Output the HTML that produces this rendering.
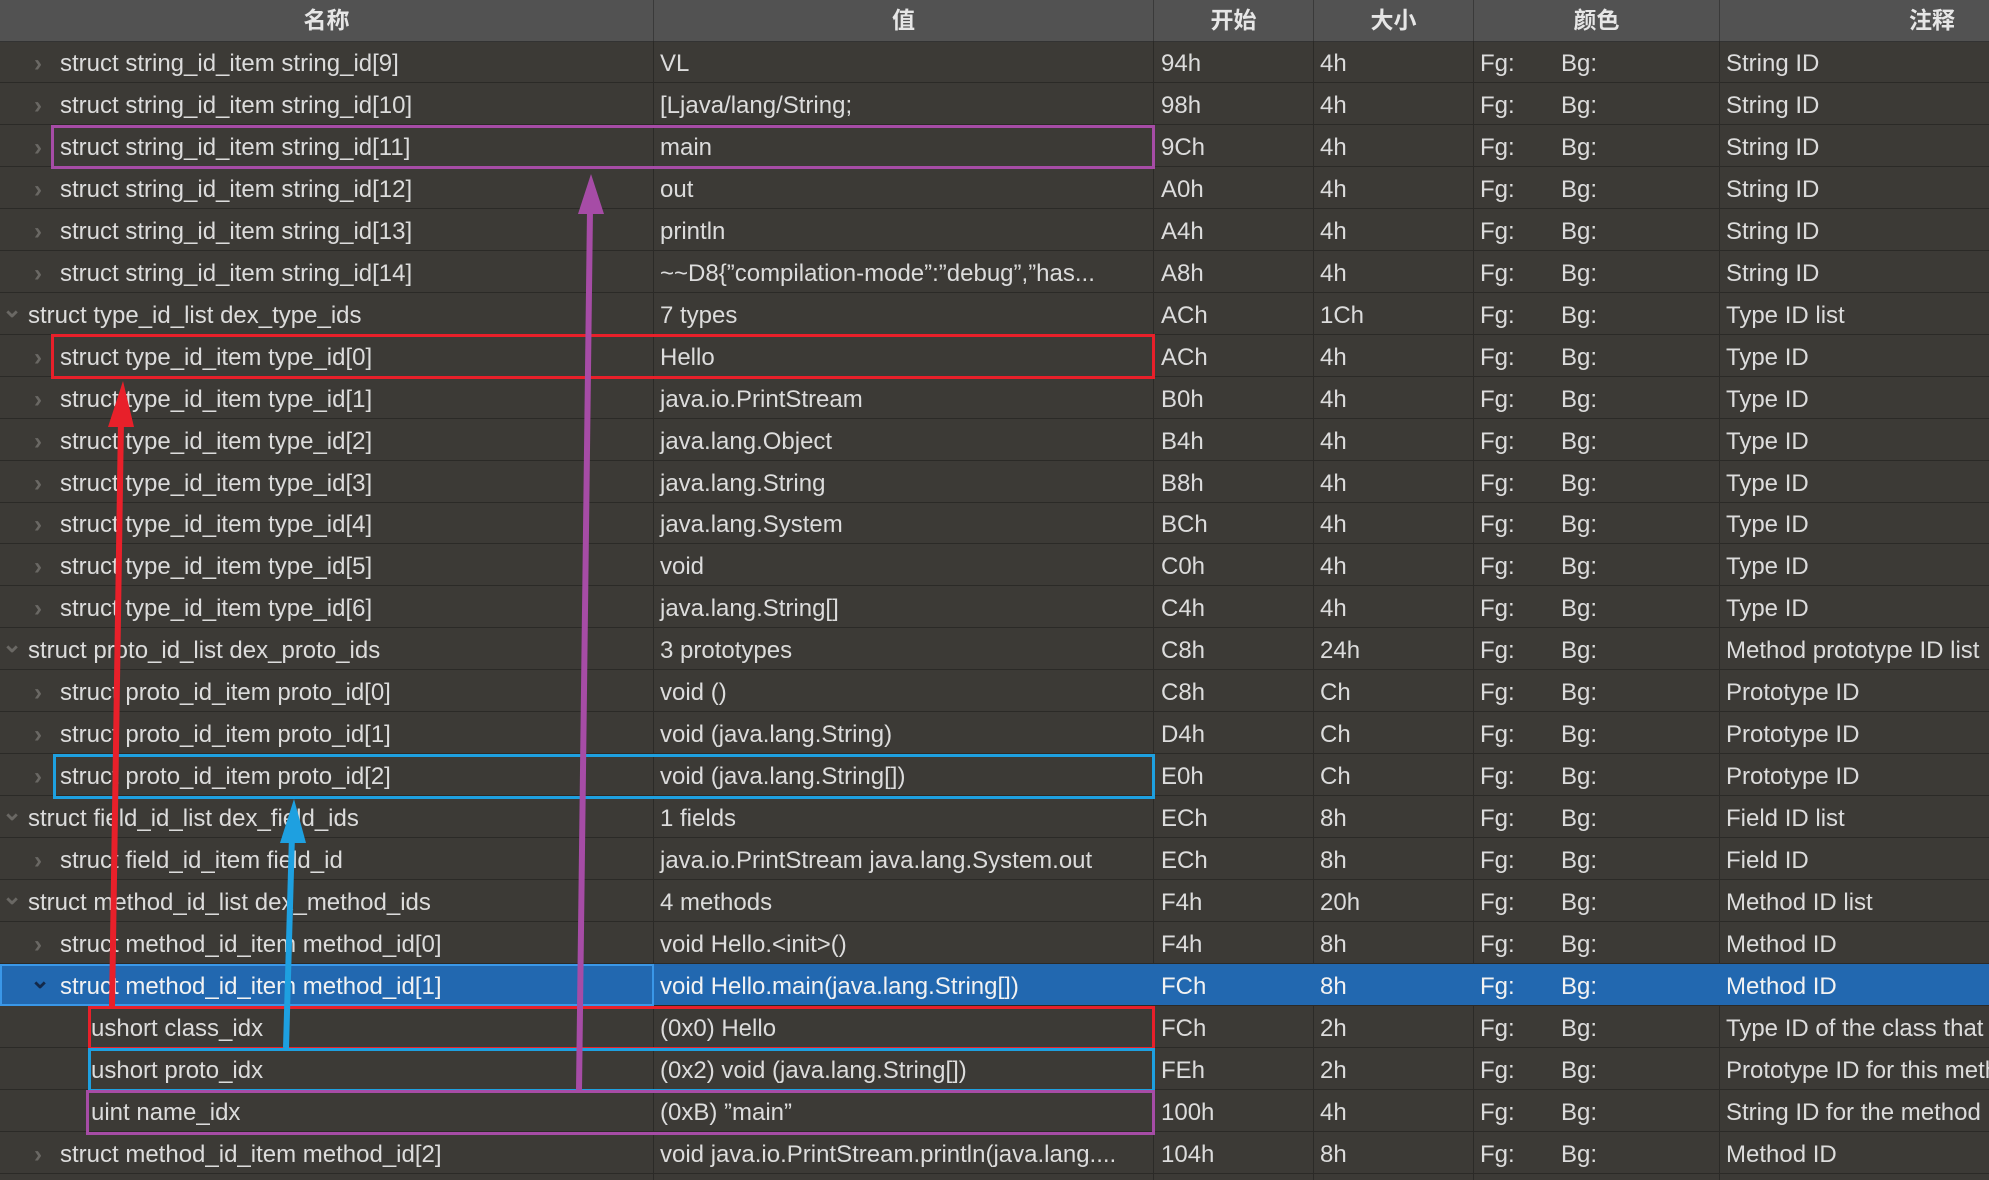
<!DOCTYPE html>
<html style="margin:0;width:1989px;height:1180px;overflow:hidden"><head><meta charset="utf-8"><style>
body{margin:0;width:1989px;height:1180px;overflow:hidden;background:#3c3a36;font-family:"Liberation Sans","Noto Sans CJK SC",sans-serif;color:#dcdcdc;position:relative}
.hdr{position:absolute;left:0;top:0;width:1989px;height:41px;background:#525252;border-bottom:1px solid #333}
.hdr div{position:absolute;top:0;height:41px;line-height:41px;text-align:center;font-size:23px;font-weight:bold;color:#e6e6e6;border-right:1px solid #3a3a3a;box-sizing:border-box}
.row{position:absolute;left:0;width:1989px;height:42px;border-bottom:1px solid #2b2a27;box-sizing:border-box;font-size:24px;overflow:hidden}
.row span{position:absolute;top:2px;line-height:41px;white-space:nowrap}
.vl{position:absolute;top:41px;height:1139px;width:1px;background:#2b2a27}
.sel{background:#2268b0;color:#f2f2f2}
.chev{color:#6a6864;font-size:24px;font-weight:bold}
.box{position:absolute;box-sizing:border-box;border:3px solid}
</style></head><body>
<div class="hdr">
<div style="left:0;width:654px">名称</div>
<div style="left:654px;width:500px">值</div>
<div style="left:1154px;width:160px">开始</div>
<div style="left:1314px;width:160px">大小</div>
<div style="left:1474px;width:246px">颜色</div>
<div style="left:1720px;width:269px;text-align:right;padding-right:34px;border:none">注释</div>
</div>
<div class="vl" style="left:653px"></div><div class="vl" style="left:1153px"></div><div class="vl" style="left:1313px"></div><div class="vl" style="left:1473px"></div><div class="vl" style="left:1719px"></div>
<div id="rows"></div>
<script>
var R=[
[1,"struct string_id_item string_id[9]","VL","94h","4h","String ID"],
[1,"struct string_id_item string_id[10]","[Ljava/lang/String;","98h","4h","String ID"],
[1,"struct string_id_item string_id[11]","main","9Ch","4h","String ID"],
[1,"struct string_id_item string_id[12]","out","A0h","4h","String ID"],
[1,"struct string_id_item string_id[13]","println","A4h","4h","String ID"],
[1,"struct string_id_item string_id[14]","~~D8{\u201dcompilation-mode\u201d:\u201ddebug\u201d,\u201dhas...","A8h","4h","String ID"],
[0,"struct type_id_list dex_type_ids","7 types","ACh","1Ch","Type ID list"],
[1,"struct type_id_item type_id[0]","Hello","ACh","4h","Type ID"],
[1,"struct type_id_item type_id[1]","java.io.PrintStream","B0h","4h","Type ID"],
[1,"struct type_id_item type_id[2]","java.lang.Object","B4h","4h","Type ID"],
[1,"struct type_id_item type_id[3]","java.lang.String","B8h","4h","Type ID"],
[1,"struct type_id_item type_id[4]","java.lang.System","BCh","4h","Type ID"],
[1,"struct type_id_item type_id[5]","void","C0h","4h","Type ID"],
[1,"struct type_id_item type_id[6]","java.lang.String[]","C4h","4h","Type ID"],
[0,"struct proto_id_list dex_proto_ids","3 prototypes","C8h","24h","Method prototype ID list"],
[1,"struct proto_id_item proto_id[0]","void ()","C8h","Ch","Prototype ID"],
[1,"struct proto_id_item proto_id[1]","void (java.lang.String)","D4h","Ch","Prototype ID"],
[1,"struct proto_id_item proto_id[2]","void (java.lang.String[])","E0h","Ch","Prototype ID"],
[0,"struct field_id_list dex_field_ids","1 fields","ECh","8h","Field ID list"],
[1,"struct field_id_item field_id","java.io.PrintStream java.lang.System.out","ECh","8h","Field ID"],
[0,"struct method_id_list dex_method_ids","4 methods","F4h","20h","Method ID list"],
[1,"struct method_id_item method_id[0]","void Hello.&lt;init&gt;()","F4h","8h","Method ID"],
[3,"struct method_id_item method_id[1]","void Hello.main(java.lang.String[])","FCh","8h","Method ID"],
[2,"ushort class_idx","(0x0) Hello","FCh","2h","Type ID of the class that defines this method"],
[2,"ushort proto_idx","(0x2) void (java.lang.String[])","FEh","2h","Prototype ID for this method"],
[2,"uint name_idx","(0xB) \u201dmain\u201d","100h","4h","String ID for the method name"],
[1,"struct method_id_item method_id[2]","void java.io.PrintStream.println(java.lang....","104h","8h","Method ID"]
];
var h="";
R.forEach(function(r,i){
 var top=41+i*41.95, lv=r[0], sel=lv==3;
 var tx=lv==0?28:(lv==2?91:60), ch="";
 if(lv==0) ch='<span class="chev" style="left:2px;top:-4px">&#8964;</span>';
 else if(lv==1) ch='<span class="chev" style="left:34px">&#8250;</span>';
 else if(sel) ch='<span class="chev" style="left:30px;top:-4px;color:#13294a">&#8964;</span>';
 h+='<div class="row'+(sel?' sel':'')+'" style="top:'+top+'px">'+ch+
 '<span style="left:'+tx+'px">'+r[1]+'</span>'+
 '<span style="left:660px">'+r[2]+'</span>'+
 '<span style="left:1161px">'+r[3]+'</span>'+
 '<span style="left:1320px">'+r[4]+'</span>'+
 '<span style="left:1480px">Fg:</span><span style="left:1561px">Bg:</span>'+
 '<span style="left:1726px">'+r[5]+'</span></div>';
});
document.getElementById('rows').innerHTML=h;
</script>
<div class="box" style="left:0;top:964px;width:654px;height:42px;border:2px solid #3a97e8"></div>
<div class="box" style="left:51px;top:125px;width:1104px;height:44px;border-color:#a64ca6"></div>
<div class="box" style="left:51px;top:334px;width:1104px;height:45px;border-color:#e8202a"></div>
<div class="box" style="left:53px;top:754px;width:1102px;height:45px;border-color:#1ea0e0"></div>
<div class="box" style="left:88px;top:1006px;width:1067px;height:44px;border-color:#e8202a"></div>
<div class="box" style="left:88px;top:1048px;width:1067px;height:44px;border-color:#1ea0e0"></div>
<div class="box" style="left:86px;top:1090px;width:1069px;height:45px;border-color:#a64ca6"></div>
<svg width="1989" height="1180" style="position:absolute;left:0;top:0" >
<line x1="112" y1="1008" x2="121" y2="420" stroke="#e8202a" stroke-width="6"/>
<polygon points="123,381 108,427 134,427" fill="#e8202a"/>
<line x1="286" y1="1048" x2="292" y2="835" stroke="#1ea0e0" stroke-width="6"/>
<polygon points="294,799 280,843 306,843" fill="#1ea0e0"/>
<line x1="579" y1="1090" x2="590" y2="210" stroke="#a64ca6" stroke-width="6"/>
<polygon points="591,174 578,214 604,214" fill="#a64ca6"/>
</svg>
</body></html>
